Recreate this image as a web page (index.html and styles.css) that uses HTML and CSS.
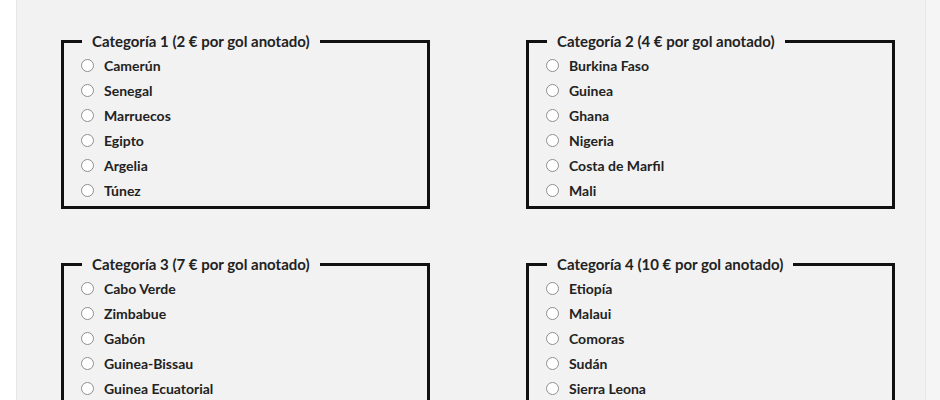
FILE: index.html
```html
<!DOCTYPE html>
<html lang="es">
<head>
<meta charset="utf-8">
<title>Categorías</title>
<link rel="stylesheet" href="styles.css">
</head>
<body>
<div class="page">
  <div class="main">
    <div class="grid">
      <fieldset class="cat">
        <legend>Categoría 1 (2 € por gol anotado)</legend>
        <ul class="opts">
          <li><span class="radio"></span>Camerún</li>
          <li><span class="radio"></span>Senegal</li>
          <li><span class="radio"></span>Marruecos</li>
          <li><span class="radio"></span>Egipto</li>
          <li><span class="radio"></span>Argelia</li>
          <li><span class="radio"></span>Túnez</li>
        </ul>
      </fieldset>
      <fieldset class="cat">
        <legend>Categoría 2 (4 € por gol anotado)</legend>
        <ul class="opts">
          <li><span class="radio"></span>Burkina Faso</li>
          <li><span class="radio"></span>Guinea</li>
          <li><span class="radio"></span>Ghana</li>
          <li><span class="radio"></span>Nigeria</li>
          <li><span class="radio"></span>Costa de Marfil</li>
          <li><span class="radio"></span>Mali</li>
        </ul>
      </fieldset>
      <fieldset class="cat">
        <legend>Categoría 3 (7 € por gol anotado)</legend>
        <ul class="opts">
          <li><span class="radio"></span>Cabo Verde</li>
          <li><span class="radio"></span>Zimbabue</li>
          <li><span class="radio"></span>Gabón</li>
          <li><span class="radio"></span>Guinea-Bissau</li>
          <li><span class="radio"></span>Guinea Ecuatorial</li>
        </ul>
      </fieldset>
      <fieldset class="cat">
        <legend>Categoría 4 (10 € por gol anotado)</legend>
        <ul class="opts">
          <li><span class="radio"></span>Etiopía</li>
          <li><span class="radio"></span>Malaui</li>
          <li><span class="radio"></span>Comoras</li>
          <li><span class="radio"></span>Sudán</li>
          <li><span class="radio"></span>Sierra Leona</li>
        </ul>
      </fieldset>
    </div>
  </div>
</div>
</body>
</html>
```

FILE: styles.css
```css
html, body {
  margin: 0;
  padding: 0;
}
body {
  background: #f5f5f5;
  font-family: "Lato", "Noto Sans", sans-serif;
  color: #222;
  height: 400px;
  overflow: hidden;
}
.page {
  display: flex;
  height: 400px;
}
.page::before {
  content: "";
  width: 16px;
  background: #fff;
  flex: none;
}
.main {
  width: 910px;
  background: #f2f2f2;
  border-left: 1px solid #e6e6e6;
  border-right: 1px solid #e6e6e6;
  padding: 31px 0 0 44px;
  box-sizing: border-box;
}
.grid {
  display: grid;
  grid-template-columns: 369px 369px;
  column-gap: 96px;
  row-gap: 45px;
}
.cat {
  margin: 0;
  border: 3px solid #111;
  padding: 0 18px 0 18px;
  height: 178px;
  box-sizing: border-box;
  min-width: 0;
}
.cat legend {
  padding: 0 10px;
  font-size: 15px;
  font-weight: 700;
  line-height: 20px;
}
.opts {
  list-style: none;
  margin: 2px 0 0 0;
  padding: 0;
  display: flex;
  flex-direction: column;
}
.opts li {
  display: flex;
  align-items: center;
  height: 25px;
  font-size: 14px;
  font-weight: 700;
}
.radio {
  width: 11px;
  height: 11px;
  border: 1px solid #8f8f8f;
  border-radius: 50%;
  background: #fff;
  margin-right: 10px;
  margin-left: -1px;
  flex: none;
}
```
